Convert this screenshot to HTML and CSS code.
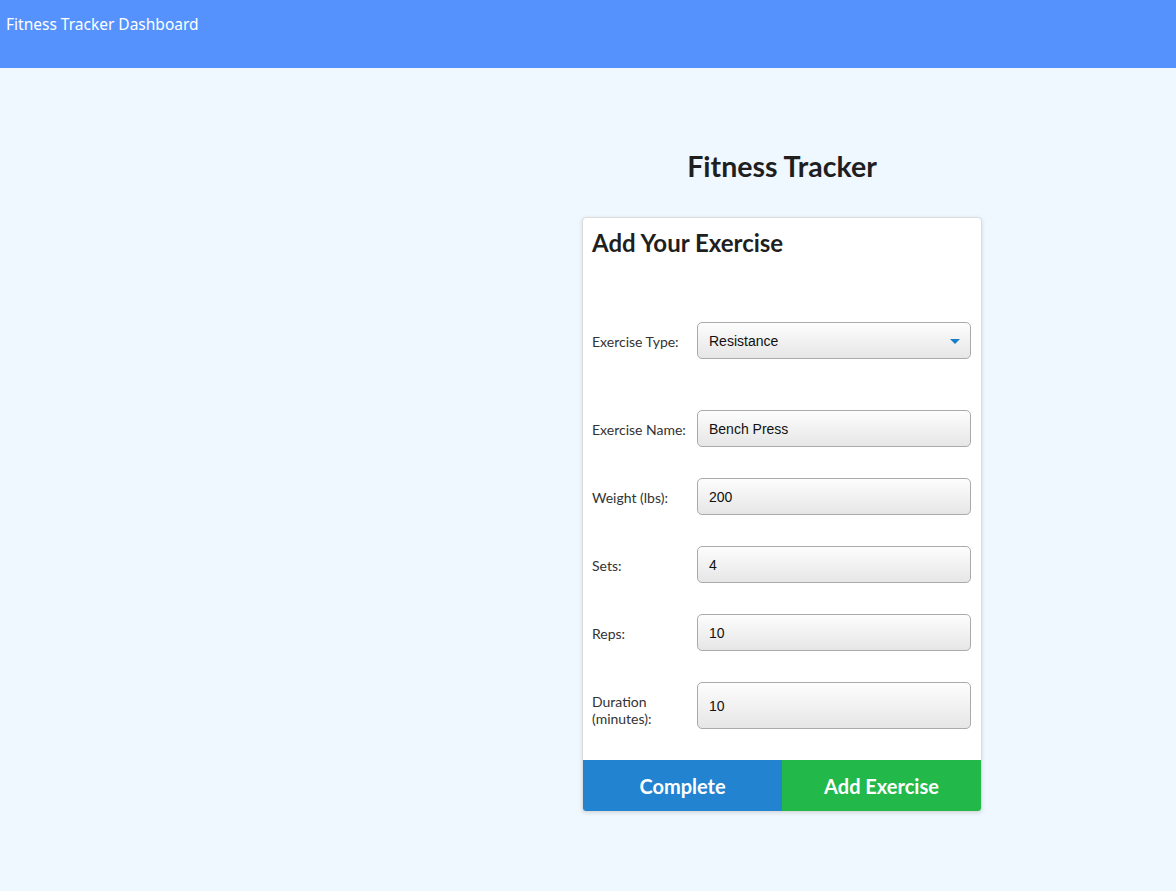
FILE: index.html
```html
<!DOCTYPE html>
<html lang="en">
<head>
<meta charset="utf-8">
<title>Fitness Tracker Dashboard</title>
<link rel="stylesheet" href="styles.css">
</head>
<body>
<header class="topbar">Fitness Tracker Dashboard</header>
<main class="layout">
  <section class="panel">
    <h1 class="page-title">Fitness Tracker</h1>
    <div class="card">
      <h2 class="card-title">Add Your Exercise</h2>
      <form class="form">
        <div class="row row-type">
          <label class="label">Exercise Type:</label>
          <div class="field select">Resistance<span class="caret"></span></div>
        </div>
        <div class="row">
          <label class="label">Exercise Name:</label>
          <div class="field">Bench Press</div>
        </div>
        <div class="row">
          <label class="label">Weight (lbs):</label>
          <div class="field">200</div>
        </div>
        <div class="row">
          <label class="label">Sets:</label>
          <div class="field">4</div>
        </div>
        <div class="row">
          <label class="label">Reps:</label>
          <div class="field">10</div>
        </div>
        <div class="row">
          <label class="label">Duration (minutes):</label>
          <div class="field">10</div>
        </div>
      </form>
      <div class="actions">
        <button class="btn btn-complete" type="button">Complete</button>
        <button class="btn btn-add" type="button">Add Exercise</button>
      </div>
    </div>
  </section>
</main>
</body>
</html>
```

FILE: styles.css
```css
* { box-sizing: border-box; }
html, body { margin: 0; padding: 0; }
body {
  background: #eff7ff;
  font-family: "Lato", "Liberation Sans", sans-serif;
  color: #222;
  min-height: 891px;
}
.topbar {
  height: 68px;
  background: #5592fe;
  color: #fff;
  font-family: "Noto Sans", "Open Sans", sans-serif;
  font-size: 15.5px;
  padding: 13px 6px 0;
  line-height: 22px;
}
.layout {
  display: grid;
  grid-template-columns: 582px 400px 1fr;
}
.panel {
  grid-column: 2;
  display: flex;
  flex-direction: column;
}
.page-title {
  margin: 80px 0 0;
  text-align: center;
  font-size: 28.5px;
  font-weight: 700;
  line-height: 36px;
  color: #1f1f1f;
}
.card {
  margin-top: 33px;
  background: #fff;
  border: 1px solid #dcdcdc;
  border-radius: 4px;
  box-shadow: 0 1px 4px rgba(0,0,0,0.12);
  overflow: hidden;
}
.card-title {
  margin: 0;
  padding: 10px 9px 0;
  font-size: 24px;
  font-weight: 700;
  line-height: 30px;
  color: #1f1f1f;
}
.form {
  padding: 64px 10px 31px 9px;
  display: flex;
  flex-direction: column;
  gap: 31px;
}
.row {
  display: flex;
  align-items: stretch;
  gap: 5px;
}
.row-type { margin-bottom: 20px; }
.label {
  width: 100px;
  flex: none;
  padding: 11px 0 2px;
  font-size: 14px;
  line-height: 17px;
  color: #333;
}
.field {
  flex: 1;
  min-height: 37px;
  display: flex;
  align-items: center;
  padding: 0 11px;
  border: 1px solid #aaa;
  border-radius: 5px;
  background: linear-gradient(#fdfdfd, #e6e6e6);
  font-family: "Liberation Sans", Arial, sans-serif;
  font-size: 14px;
  color: #111;
}
.select { position: relative; }
.caret {
  position: absolute;
  right: 10px;
  top: 16px;
  width: 0;
  height: 0;
  border-left: 5px solid transparent;
  border-right: 5px solid transparent;
  border-top: 5px solid #1a7ec4;
}
.actions {
  display: grid;
  grid-template-columns: 1fr 1fr;
}
.btn {
  height: 51px;
  border: 0;
  margin: 0;
  color: #fff;
  font-family: "Lato", sans-serif;
  font-size: 20px;
  font-weight: 700;
  cursor: pointer;
}
.btn-complete { background: #2283d0; }
.btn-add { background: #22b94a; }
```
